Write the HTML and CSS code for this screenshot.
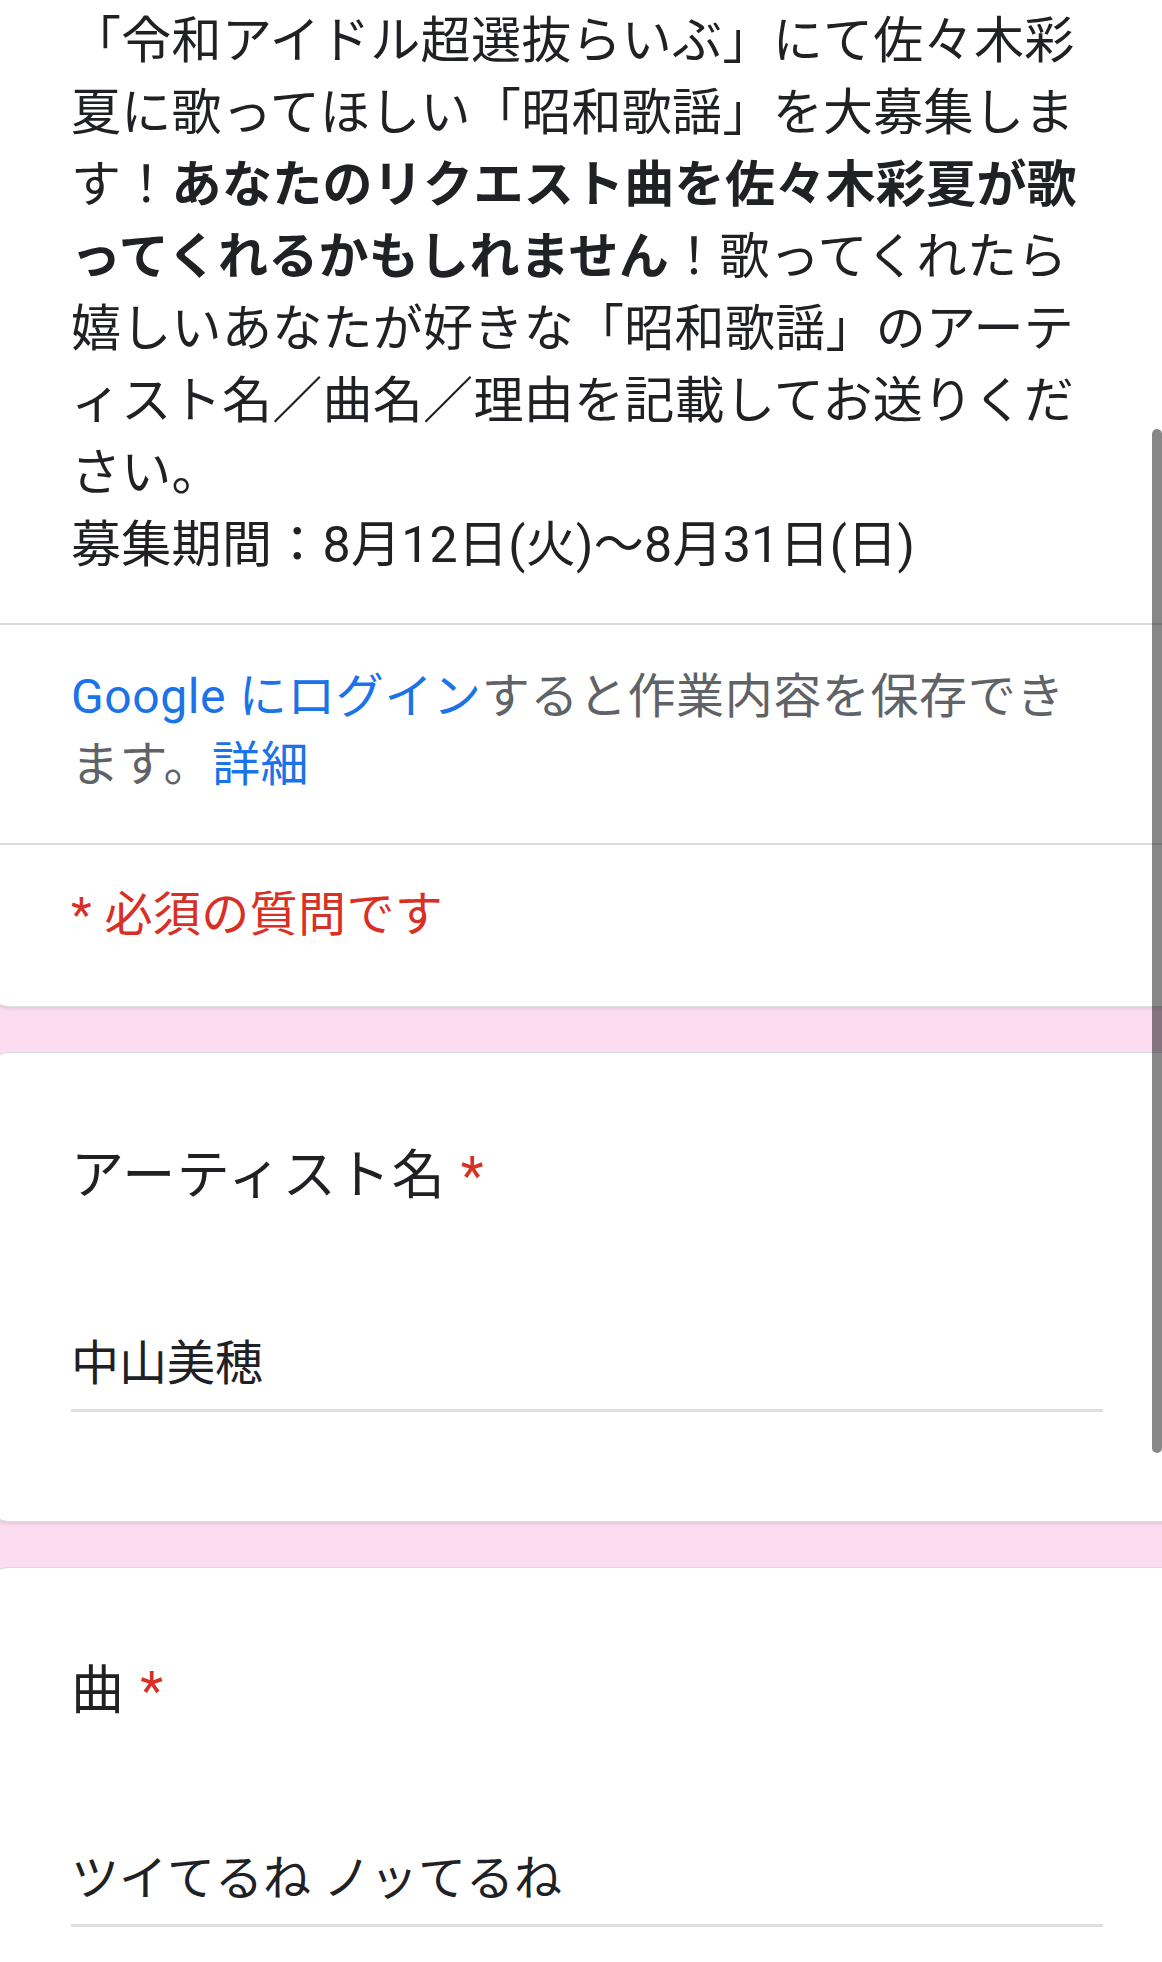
FILE: index.html
```html
<!DOCTYPE html>
<html lang="ja">
<head>
<meta charset="utf-8">
<title>昭和歌謡リクエスト</title>
<link rel="stylesheet" href="styles.css">
</head>
<body>
<main class="form">
  <section class="card card-head">
    <div class="sec sec-desc">
      <p class="desc">「令和アイドル超選抜らいぶ」にて佐々木彩夏に歌ってほしい「昭和歌謡」を大募集します！<b>あなたのリクエスト曲を佐々木彩夏が歌ってくれるかもしれません</b>！歌ってくれたら嬉しいあなたが好きな「昭和歌謡」のアーティスト名／曲名／理由を記載してお送りください。<br>募集期間：8月12日(火)〜8月31日(日)</p>
    </div>
    <div class="sec sec-login">
      <p class="login"><a class="link">Google にログイン</a>すると作業内容を保存できます。<a class="link">詳細</a></p>
    </div>
    <div class="sec sec-req">
      <p class="req">* 必須の質問です</p>
    </div>
  </section>

  <section class="card card-q">
    <h2 class="q-title">アーティスト名 <span class="ast">*</span></h2>
    <div class="answer">中山美穂</div>
  </section>

  <section class="card card-q">
    <h2 class="q-title">曲 <span class="ast">*</span></h2>
    <div class="answer">ツイてるね ノッてるね</div>
  </section>
</main>
<div class="scrollbar"></div>
</body>
</html>
```
FILE: styles.css
```css
* {
  box-sizing: border-box;
}

html, body {
  margin: 0;
  padding: 0;
}

body {
  width: 1162px;
  height: 1962px;
  overflow: hidden;
  background: #fcdcf0;
  font-family: Roboto, "Noto Sans CJK JP", "Noto Sans", sans-serif;
  color: #202124;
}

.form {
  display: flex;
  flex-direction: column;
  gap: 45px;
  margin: -40px -24px 0 -8px;
}

.card {
  background: #ffffff;
  border: 1px solid #dadce0;
  border-radius: 16px;
  box-shadow: 0 2px 3px rgba(60, 64, 67, 0.12);
}

p {
  margin: 0;
}

.sec {
  padding-left: 78px;
}

.sec + .sec {
  border-top: 2px solid #dadce0;
}

.sec-desc {
  padding-top: 44px;
  padding-bottom: 42px;
}

.desc {
  width: 1024px;
  font-size: 50px;
  line-height: 72px;
  letter-spacing: 0.3px;
  color: #202124;
}

.desc b {
  font-weight: 700;
}

.sec-login {
  padding-top: 38px;
  padding-bottom: 44px;
}

.login {
  width: 1022px;
  font-size: 48px;
  line-height: 68px;
  letter-spacing: 0.6px;
  color: #5f6368;
}

.link {
  color: #1a73e8;
  text-decoration: none;
}

.sec-req {
  padding-top: 36px;
  padding-bottom: 57px;
}

.req {
  font-size: 48px;
  line-height: 68px;
  letter-spacing: 0.4px;
  color: #d93025;
}

.card-q {
  padding: 86px 0 109px 78px;
}

.q-title {
  margin: 0;
  font-size: 53px;
  line-height: 74px;
  font-weight: 400;
  letter-spacing: 1.5px;
  color: #202124;
}

.ast {
  color: #d93025;
}

.answer {
  width: 1032px;
  margin-top: 121px;
  padding-bottom: 15px;
  border-bottom: 3px solid #e0e0e0;
  font-size: 48px;
  line-height: 60px;
  color: #202124;
}

.scrollbar {
  position: fixed;
  top: 429px;
  right: 0;
  width: 10px;
  height: 1024px;
  border-radius: 5px;
  background: rgba(0, 0, 0, 0.47);
}
```
